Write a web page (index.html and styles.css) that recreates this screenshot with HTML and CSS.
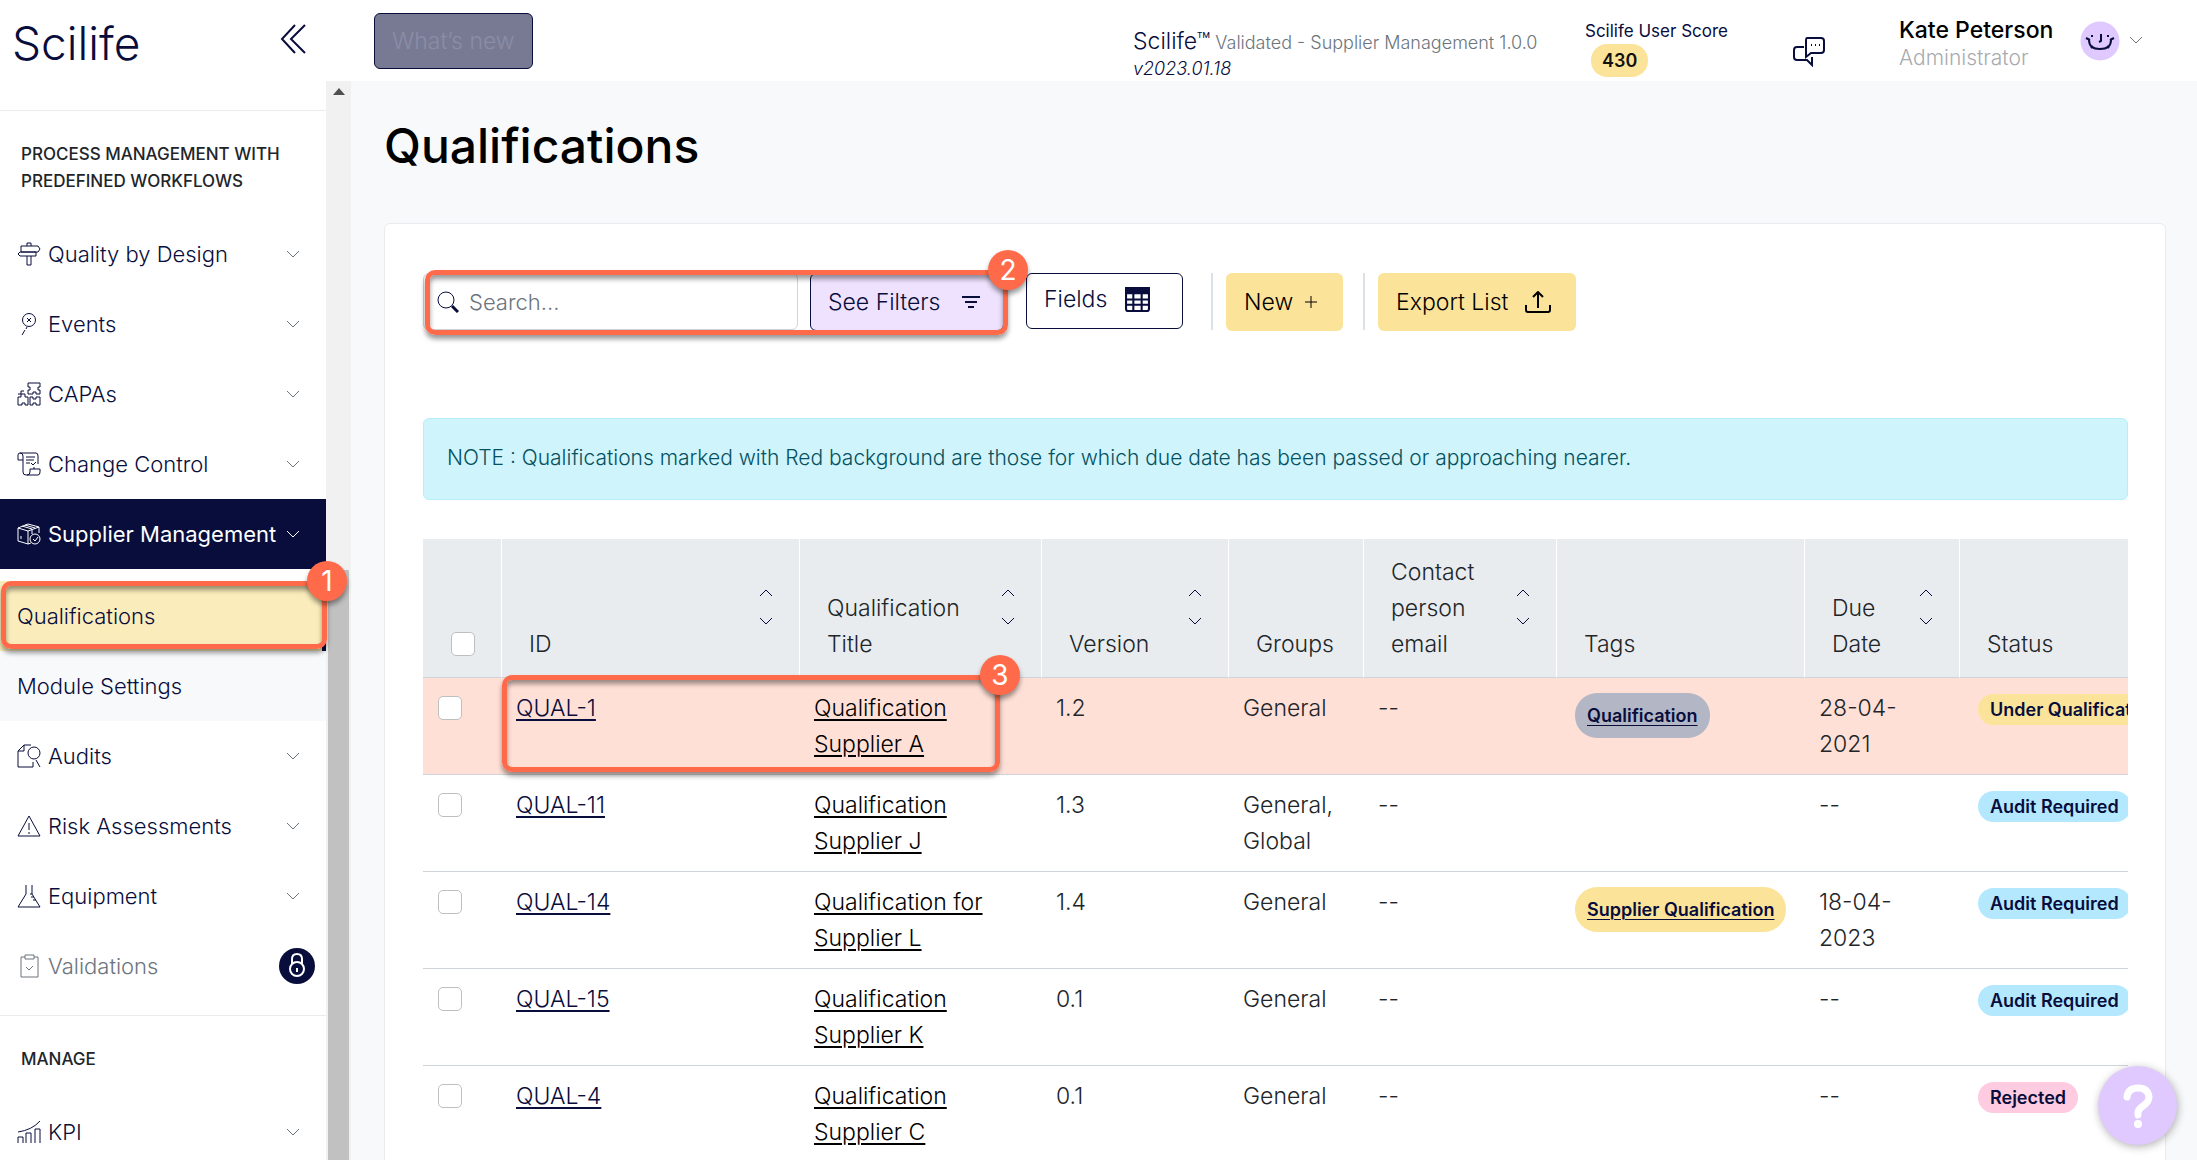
FILE: index.html
```
<!DOCTYPE html>
<html lang="en">
<head>
  <meta charset="UTF-8">
  <meta name="viewport" content="width=device-width, initial-scale=1.0">
  <title>Qualifications - Scilife</title>
  <link rel="stylesheet" href="styles.css">
</head>
<body>
  <!-- Shared icons -->
  <svg class="sprite" aria-hidden="true">
    <symbol id="chevron" viewBox="0 0 14 14"><path d="M1 4l6 6 6-6"/></symbol>
    <symbol id="sort" viewBox="0 0 14 38"><path d="M1 8l6-6 6 6M1 30l6 6 6-6"/></symbol>
  </svg>

  <header class="topbar">
    <div class="brand">
      <a href="#" class="logo">Scilife</a>
      <button class="icon-btn" aria-label="Collapse menu">
        <svg width="26" height="30" viewBox="0 0 26 30"><path d="M15 1L2 15l13 14M25 1L11 15l14 14"/></svg>
      </button>
    </div>
    <button class="btn btn-news" disabled>What’s new</button>
    <div class="topbar-info">
      <div class="version">
        <div><span class="product">Scilife™</span> <span class="validated">Validated - Supplier Management 1.0.0</span></div>
        <em>v2023.01.18</em>
      </div>
      <div class="score">
        <div>Scilife User Score</div>
        <span class="score-value">430</span>
      </div>
      <button class="icon-btn chat" aria-label="Messages">
        <svg width="32" height="30" viewBox="0 0 32 30">
          <path d="M14 1h14q3 0 3 3v9q0 3-3 3H18l-5 4V4q0-3 1-3zM11 10H4q-3 0-3 3v7q0 3 3 3h10l5 5v-8"/>
          <path class="dots" d="M18 8h1M22 8h1M26 8h1"/>
        </svg>
      </button>
      <div class="user">
        <div class="user-text">
          <div class="user-name">Kate Peterson</div>
          <div class="user-role">Administrator</div>
        </div>
        <svg class="avatar" width="40" height="40" viewBox="0 0 40 40">
          <circle class="face" cx="20" cy="20" r="19.5"/>
          <path d="M6 17l4 2M34 17l-4 2M9 19q0 9 11 9t11-9M21 13v7l-2 1M12 14v2M28 14v2M13 25l-2 2M27 25l2 2"/>
        </svg>
        <svg class="chevron" width="14" height="14"><use href="#chevron"/></svg>
      </div>
    </div>
  </header>

  <div class="layout">
    <nav class="sidebar">
      <h2 class="menu-title">PROCESS MANAGEMENT WITH PREDEFINED WORKFLOWS</h2>
      <a href="#" class="menu-item">
        <svg class="menu-icon" viewBox="0 0 24 24"><path d="M4 4h17l2 3-2 3H4zM3 10h16v4H3l-2-2zM10 4V1h4v3M10 14v9h4v-9"/></svg>
        <span>Quality by Design</span>
        <svg class="chevron" width="14" height="14"><use href="#chevron"/></svg>
      </a>
      <a href="#" class="menu-item">
        <svg class="menu-icon" viewBox="0 0 24 24"><circle cx="12" cy="8" r="6.5"/><path d="M10 6l4 4M14 6l-4 4M10 15l-1 2M8 18l-3 5"/></svg>
        <span>Events</span>
        <svg class="chevron" width="14" height="14"><use href="#chevron"/></svg>
      </a>
      <a href="#" class="menu-item">
        <svg class="menu-icon" viewBox="0 0 24 24"><path d="M11 1h12v4h-2v3h2v4h-4v-2h-3v2h-5V8h2V5h-2zM1 23v-8h3v-3h4v3h3v8H8v-2H5v2zM13 23v-8h3v2h3v-2h4v8h-4v-2h-3v2zM1 12h3V9h3"/></svg>
        <span>CAPAs</span>
        <svg class="chevron" width="14" height="14"><use href="#chevron"/></svg>
      </a>
      <a href="#" class="menu-item">
        <svg class="menu-icon" viewBox="0 0 24 24"><path d="M3 1h16q2 0 2 3v8M3 1Q1 1 1 3v5h5V4q0-3-3-3zM6 8v12q0 3 3 3h12q2 0 2-3v-3H13v3q0 3-3 3M17 17v-2M9 5h9M9 8h8M9 11h4M14 11l2 2 3-3"/></svg>
        <span>Change Control</span>
        <svg class="chevron" width="14" height="14"><use href="#chevron"/></svg>
      </a>
      <a href="#" class="menu-item active">
        <svg class="menu-icon" viewBox="0 0 24 24"><path d="M1 6l10-4 11 3v6M1 6v13l10 3V9zM11 9l11-4M5 4l10 3v5M8 3l10 3M11 22l3-1M4 14v3"/><circle cx="18" cy="17" r="5"/><path d="M16 17l2 2 3-4"/></svg>
        <span>Supplier Management</span>
        <svg class="chevron" width="14" height="14"><use href="#chevron"/></svg>
      </a>
      <div class="submenu">
        <div class="marked">
          <a href="#" class="submenu-item current">Qualifications</a>
          <div class="callout callout-menu"><span class="callout-number">1</span></div>
        </div>
        <a href="#" class="submenu-item">Module Settings</a>
      </div>
      <a href="#" class="menu-item">
        <svg class="menu-icon" viewBox="0 0 24 24"><path d="M14 1H7L1 7v16h15v-5M7 1v6H1M19 16l4 7"/><circle cx="17" cy="9" r="6"/></svg>
        <span>Audits</span>
        <svg class="chevron" width="14" height="14"><use href="#chevron"/></svg>
      </a>
      <a href="#" class="menu-item">
        <svg class="menu-icon" viewBox="0 0 24 24"><path d="M12 2l11 20H1zM12 9v7M12 18v2"/></svg>
        <span>Risk Assessments</span>
        <svg class="chevron" width="14" height="14"><use href="#chevron"/></svg>
      </a>
      <a href="#" class="menu-item">
        <svg class="menu-icon" viewBox="0 0 24 24"><path d="M9 1v9L1 23h22L15 10V1M15 10h-2M17 13h-3M19 16h-3"/></svg>
        <span>Equipment</span>
        <svg class="chevron" width="14" height="14"><use href="#chevron"/></svg>
      </a>
      <a href="#" class="menu-item locked">
        <svg class="menu-icon" viewBox="0 0 24 24"><path d="M8 3H4v20h17V3h-4M8 1h9v4H8zM9 13l3 3 4-4"/></svg>
        <span>Validations</span>
        <svg class="lock" width="36" height="36" viewBox="0 0 36 36">
          <circle class="lock-bg" cx="18" cy="18" r="18"/>
          <circle cx="18" cy="21" r="7"/>
          <path d="M13 16v-5q0-5 5-5t5 5v5M18 20v4"/>
        </svg>
      </a>
      <h2 class="menu-title manage">MANAGE</h2>
      <a href="#" class="menu-item">
        <svg class="menu-icon" viewBox="0 0 24 24"><path d="M1 23v-6h5v6M9 23V13h5v10M18 23V9h5v14M1 12q14-2 22-11"/></svg>
        <span>KPI</span>
        <svg class="chevron" width="14" height="14"><use href="#chevron"/></svg>
      </a>
    </nav>
    <div class="scrollbar">
      <svg width="12" height="7" viewBox="0 0 12 7"><path d="M6 0l6 7H0z"/></svg>
      <div class="scrollbar-thumb"></div>
    </div>

    <main class="content">
      <h1>Qualifications</h1>
      <section class="card">
        <div class="toolbar">
          <div class="search-group">
            <label class="search">
              <svg width="22" height="22" viewBox="0 0 22 22"><circle cx="9" cy="9" r="8"/><path class="handle" d="M15 15l6 6"/></svg>
              <input type="text" placeholder="Search..." aria-label="Search">
            </label>
            <button class="btn btn-filter">See Filters
              <svg width="18" height="12" viewBox="0 0 18 12"><path d="M0 1h18M3 6h12M6 11h6"/></svg>
            </button>
            <div class="callout"><span class="callout-number">2</span></div>
          </div>
          <button class="btn btn-outline">Fields
            <svg width="25" height="25" viewBox="0 0 24 24"><rect x="1" y="1" width="22" height="22" rx="2"/><path class="fill" d="M1 1h22v5H1z"/><path d="M1 12h22M1 17h22M8 6v17M16 6v17"/></svg>
          </button>
          <span class="separator"></span>
          <button class="btn btn-yellow">New
            <svg width="12" height="12" viewBox="0 0 12 12"><path d="M6 0v12M0 6h12"/></svg>
          </button>
          <span class="separator"></span>
          <button class="btn btn-yellow btn-export">Export List
            <svg width="26" height="22" viewBox="0 0 26 22"><path d="M1 14v5q0 2 2 2h20q2 0 2-2v-5M13 17V1M8 6l5-5 5 5"/></svg>
          </button>
        </div>

        <div class="alert">NOTE : Qualifications marked with Red background are those for which due date has been passed or approaching nearer.</div>

        <div class="table-wrap">
          <table>
            <colgroup>
              <col class="col-check"><col class="col-id"><col class="col-title"><col class="col-version"><col class="col-groups">
              <col class="col-contact"><col class="col-tags"><col class="col-due"><col class="col-status">
            </colgroup>
            <thead>
              <tr>
                <th><input type="checkbox" aria-label="Select all"></th>
                <th><div class="th">ID<svg class="sort" width="14" height="38"><use href="#sort"/></svg></div></th>
                <th><div class="th">Qualification Title<svg class="sort" width="14" height="38"><use href="#sort"/></svg></div></th>
                <th><div class="th">Version<svg class="sort" width="14" height="38"><use href="#sort"/></svg></div></th>
                <th><div class="th">Groups</div></th>
                <th><div class="th">Contact person email<svg class="sort" width="14" height="38"><use href="#sort"/></svg></div></th>
                <th><div class="th">Tags</div></th>
                <th><div class="th">Due Date<svg class="sort" width="14" height="38"><use href="#sort"/></svg></div></th>
                <th><div class="th">Status</div></th>
              </tr>
            </thead>
            <tbody>
              <tr class="overdue">
                <td><input type="checkbox" aria-label="Select QUAL-1"></td>
                <td class="marked"><a href="#" class="id-link">QUAL-1</a><div class="callout callout-row"><span class="callout-number">3</span></div></td>
                <td><a href="#">Qualification<br>Supplier A</a></td>
                <td>1.2</td>
                <td>General</td>
                <td>--</td>
                <td><a href="#" class="tag tag-gray">Qualification</a></td>
                <td>28-04-<br>2021</td>
                <td><span class="status status-yellow">Under Qualification</span></td>
              </tr>
              <tr>
                <td><input type="checkbox" aria-label="Select QUAL-11"></td>
                <td><a href="#" class="id-link">QUAL-11</a></td>
                <td><a href="#">Qualification<br>Supplier J</a></td>
                <td>1.3</td>
                <td>General, Global</td>
                <td>--</td>
                <td></td>
                <td>--</td>
                <td><span class="status status-blue">Audit Required</span></td>
              </tr>
              <tr>
                <td><input type="checkbox" aria-label="Select QUAL-14"></td>
                <td><a href="#" class="id-link">QUAL-14</a></td>
                <td><a href="#">Qualification for<br>Supplier L</a></td>
                <td>1.4</td>
                <td>General</td>
                <td>--</td>
                <td><a href="#" class="tag tag-yellow">Supplier Qualification</a></td>
                <td>18-04-<br>2023</td>
                <td><span class="status status-blue">Audit Required</span></td>
              </tr>
              <tr>
                <td><input type="checkbox" aria-label="Select QUAL-15"></td>
                <td><a href="#" class="id-link">QUAL-15</a></td>
                <td><a href="#">Qualification<br>Supplier K</a></td>
                <td>0.1</td>
                <td>General</td>
                <td>--</td>
                <td></td>
                <td>--</td>
                <td><span class="status status-blue">Audit Required</span></td>
              </tr>
              <tr>
                <td><input type="checkbox" aria-label="Select QUAL-4"></td>
                <td><a href="#" class="id-link">QUAL-4</a></td>
                <td><a href="#">Qualification<br>Supplier C</a></td>
                <td>0.1</td>
                <td>General</td>
                <td>--</td>
                <td></td>
                <td>--</td>
                <td><span class="status status-pink">Rejected</span></td>
              </tr>
            </tbody>
          </table>
        </div>
      </section>
    </main>
  </div>

  <button class="help" aria-label="Help">
    <svg width="30" height="44" viewBox="0 0 30 44"><path d="M4 13Q5 4 15 4t11 9q0 5-6 9t-5 9"/><circle cx="15" cy="40" r="4"/></svg>
  </button>
</body>
</html>
```
FILE: styles.css
```
:root {
  --navy: #080d3c;
  --text: #212529;
  --muted: #6c757d;
  --yellow: #fbe49a;
  --lilac: #dfc9fe;
  --orange: #ff6b4a;
  --border: #e9ecef;
  --page: #f8f9fb;
}

* {
  margin: 0;
  padding: 0;
  box-sizing: border-box;
}

body {
  font-family: Inter, "Open Sans", sans-serif;
  font-size: 23px;
  font-weight: 300;
  line-height: 36px;
  color: var(--text);
  background: var(--page);
  height: 100vh;
  display: flex;
  flex-direction: column;
  overflow: hidden;
}

svg {
  fill: none;
  stroke: currentColor;
  flex-shrink: 0;
}

a {
  color: inherit;
}

button,
input {
  font: inherit;
  color: inherit;
}

.sprite {
  position: absolute;
  width: 0;
  height: 0;
}

/* Top bar */
.topbar {
  display: flex;
  align-items: flex-start;
  height: 81px;
  background: white;
  flex-shrink: 0;
  color: var(--navy);
}

.brand {
  width: 374px;
  padding: 19px 68px 0 12px;
  display: flex;
  justify-content: space-between;
  flex-shrink: 0;
}

.logo {
  font-size: 46px;
  line-height: 48px;
  text-decoration: none;
}

.icon-btn {
  background: none;
  border: none;
  display: flex;
  cursor: pointer;
}

.brand .icon-btn {
  margin-top: 5px;
  height: 30px;
  stroke-width: 2;
}

.btn {
  display: inline-flex;
  align-items: center;
  border: 1px solid transparent;
  border-radius: 6px;
  height: 56px;
  padding: 0 17px;
  white-space: nowrap;
}

.btn-news {
  margin-top: 13px;
  background: #787a94;
  border-color: var(--navy);
  color: #8b8da5;
}

.topbar-info {
  margin-left: auto;
  padding-right: 54px;
  display: flex;
  align-items: flex-start;
}

.version {
  padding-top: 28px;
  font-size: 18px;
  line-height: 26px;
  width: 452px;
  white-space: nowrap;
}

.product {
  font-size: 23px;
}

.validated {
  color: var(--muted);
}

.version em {
  display: block;
}

.score {
  padding-top: 18px;
  width: 208px;
  font-size: 17px;
  line-height: 26px;
  font-weight: 400;
}

.score-value {
  display: inline-block;
  margin-left: 6px;
  padding: 0 11px;
  border-radius: 16px;
  background: var(--yellow);
  color: #111;
  font-size: 18px;
  line-height: 33px;
  font-weight: 600;
}

.chat {
  margin-top: 37px;
  width: 106px;
  stroke-width: 2;
}

.user {
  display: flex;
  padding-top: 16px;
}

.user-text {
  width: 181px;
  line-height: 28px;
}

.user-name {
  color: black;
  font-weight: 500;
}

.user-role {
  font-size: 21px;
  color: #a8abb0;
}

.avatar {
  margin: 5px 9px 0 0;
  stroke-width: 2;
}

.face {
  fill: var(--lilac);
  stroke: none;
}

.user .chevron {
  margin-top: 17px;
  color: var(--muted);
}

/* Sidebar */
.layout {
  display: flex;
  flex: 1;
  min-height: 0;
  overflow: hidden;
}

.sidebar {
  width: 326px;
  flex-shrink: 0;
  background: white;
  color: var(--navy);
  font-size: 22px;
}

.menu-title {
  margin-top: 29px;
  border-top: 1px solid var(--border);
  padding: 30px 20px 24px 21px;
  font-size: 17px;
  line-height: 27px;
  font-weight: 500;
  color: var(--text);
}

.menu-title.manage {
  margin-top: 14px;
}

.menu-item {
  display: flex;
  align-items: center;
  height: 70px;
  padding: 0 26px 0 17px;
  text-decoration: none;
  white-space: nowrap;
}

.menu-icon {
  width: 24px;
  height: 24px;
  margin-right: 7px;
}

.menu-item .chevron {
  margin-left: auto;
  color: var(--muted);
}

.menu-item.active {
  background: var(--navy);
  color: white;
  font-weight: 400;
}

.menu-item.active .chevron {
  color: white;
}

.menu-item.locked {
  color: var(--muted);
  padding-right: 11px;
}

.lock {
  margin-left: auto;
  color: white;
  stroke-width: 2;
}

.lock-bg {
  fill: var(--navy);
  stroke: none;
}

.submenu {
  padding-top: 12px;
}

.submenu-item {
  display: flex;
  align-items: center;
  height: 70px;
  padding-left: 17px;
  background: var(--page);
  text-decoration: none;
}

.submenu-item.current {
  background: #fbedbb;
  border-right: 4px solid var(--navy);
}

.scrollbar {
  width: 25px;
  flex-shrink: 0;
  background: #f1f1f1;
  display: flex;
  flex-direction: column;
  align-items: center;
  padding-top: 7px;
}

.scrollbar svg {
  fill: #505050;
  stroke: none;
}

.scrollbar-thumb {
  width: 21px;
  height: 55%;
  margin-top: auto;
  background: #c1c1c1;
}

/* Numbered callouts */
.marked,
.search-group {
  position: relative;
}

.callout {
  position: absolute;
  inset: -3px -4px -4px 2px;
  border: 5px solid var(--orange);
  border-radius: 10px;
  box-shadow: 0 4px 5px rgba(0, 0, 0, 0.4), inset 0 4px 5px rgba(0, 0, 0, 0.4);
  pointer-events: none;
  z-index: 1;
}

.callout-menu {
  inset: 0 -1px 2px 1px;
}

.callout-row {
  inset: -3px auto 2px 0;
  width: 498px;
}

.callout-number {
  position: absolute;
  top: -25px;
  right: -25px;
  width: 40px;
  height: 40px;
  border-radius: 50%;
  background: var(--orange);
  box-shadow: 0 4px 5px rgba(0, 0, 0, 0.4);
  color: white;
  font-size: 28px;
  font-weight: 400;
  line-height: 40px;
  text-align: center;
}

/* Content */
.content {
  flex: 1;
  min-width: 0;
  padding: 34px 31px 0 33px;
}

h1 {
  font-size: 48px;
  line-height: 62px;
  font-weight: 500;
  color: black;
}

.card {
  margin-top: 46px;
  padding: 49px 37px 40px 38px;
  background: white;
  border: 1px solid var(--border);
  border-radius: 6px;
}

.toolbar {
  display: flex;
  align-items: flex-start;
  color: var(--navy);
}

.search-group {
  display: flex;
  gap: 12px;
  margin-right: 22px;
}

.search {
  display: flex;
  align-items: center;
  gap: 10px;
  width: 375px;
  height: 57px;
  padding-left: 13px;
  border: 1px solid #ced4da;
  border-radius: 6px;
}

.handle {
  stroke-width: 3;
}

.search input {
  flex: 1;
  min-width: 0;
  border: none;
  outline: none;
  background: none;
  font-size: 22px;
}

.search input::placeholder {
  color: var(--muted);
}

.btn-filter {
  width: 194px;
  height: 58px;
  gap: 22px;
  background: #eee2fe;
  border-color: var(--navy);
  stroke-width: 2;
}

.btn-outline {
  width: 157px;
  gap: 18px;
  padding-bottom: 4px;
  background: white;
  border-color: var(--navy);
  stroke-width: 2;
}

.fill {
  fill: currentColor;
}

.separator {
  width: 2px;
  height: 57px;
  margin: 0 13px 0 28px;
  background: #dce1e6;
}

.btn-yellow {
  height: 58px;
  width: 117px;
  gap: 12px;
  background: var(--yellow);
  color: black;
}

.btn-yellow + .separator {
  margin-left: 20px;
}

.btn-export {
  width: 198px;
  gap: 17px;
  stroke-width: 2;
}

.alert {
  margin-top: 87px;
  padding: 21px 23px 23px;
  background: #cff4fc;
  border: 1px solid #b6effb;
  border-radius: 6px;
  color: #055160;
  font-size: 21px;
}

.table-wrap {
  margin-top: 39px;
  overflow: hidden;
}

table {
  width: 100%;
  table-layout: fixed;
  border-collapse: separate;
  border-spacing: 0;
}

.col-check { width: 79px; }
.col-id { width: 298px; }
.col-title { width: 242px; }
.col-version { width: 187px; }
.col-groups { width: 135px; }
.col-contact { width: 193px; }
.col-tags { width: 248px; }
.col-due { width: 155px; }
.col-status { width: 240px; }

th {
  padding: 15px 26px 15px 27px;
  background: #e8ecef;
  border-right: 1px solid white;
  border-bottom: 1px solid #ced4da;
  font-weight: 300;
  text-align: left;
  vertical-align: bottom;
}

.th {
  display: flex;
  align-items: flex-end;
  justify-content: space-between;
}

.sort {
  margin-bottom: 36px;
  color: var(--navy);
}

td {
  height: 97px;
  padding: 12px 14px;
  border-bottom: 1px solid #ced4da;
  vertical-align: top;
}

td a {
  color: black;
  text-underline-offset: 3px;
  text-decoration-thickness: 2px;
}

td .id-link {
  color: var(--navy);
}

.overdue td {
  background: #ffe0d7;
}

input[type="checkbox"] {
  appearance: none;
  display: block;
  width: 24px;
  height: 24px;
  margin: 6px 0 6px 1px;
  background: white;
  border: 1px solid #bfbfbf;
  border-radius: 5px;
}

.tag,
.status {
  display: inline-block;
  padding: 0 12px;
  font-size: 18px;
  font-weight: 600;
  color: var(--navy);
  white-space: nowrap;
}

.tag {
  margin: 3px 0 0 4px;
  border-radius: 22px;
  line-height: 45px;
  text-decoration-thickness: 1px;
}

.status {
  margin: 4px 0 0 4px;
  border-radius: 16px;
  line-height: 31px;
}

.tag-gray { background: #b3b6c4; }
.tag-yellow,
.status-yellow { background: var(--yellow); }
.status-blue { background: #b3e8ff; }
.status-pink { background: #ffcbe0; }

.help {
  position: fixed;
  right: 20px;
  bottom: 15px;
  width: 79px;
  height: 79px;
  display: flex;
  align-items: center;
  justify-content: center;
  background: var(--lilac);
  border: none;
  border-radius: 50%;
  box-shadow: 1px 2px 8px rgba(0, 0, 0, 0.3);
  color: white;
  stroke-width: 7;
  stroke-linecap: round;
  z-index: 2;
}

.help circle {
  fill: white;
  stroke: none;
}
```
